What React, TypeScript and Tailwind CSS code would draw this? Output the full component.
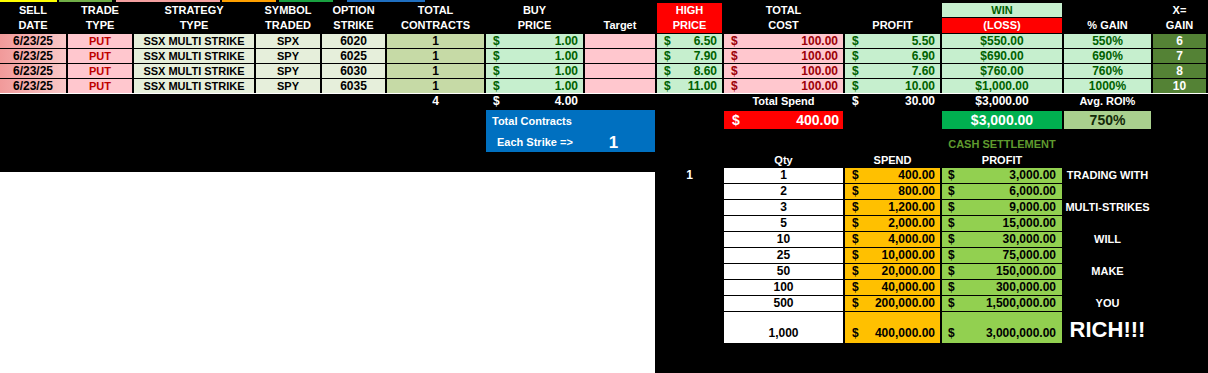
import React from 'react';

const trades = [
  { sym: 'SPX', strike: '6020', high: '6.50', profit: '5.50', win: '$550.00', gain: '550%', x: '6' },
  { sym: 'SPY', strike: '6025', high: '7.90', profit: '6.90', win: '$690.00', gain: '690%', x: '7' },
  { sym: 'SPY', strike: '6030', high: '8.60', profit: '7.60', win: '$760.00', gain: '760%', x: '8' },
  { sym: 'SPY', strike: '6035', high: '11.00', profit: '10.00', win: '$1,000.00', gain: '1000%', x: '10' },
];

const cash = [
  { qty: '1', spend: '400.00', profit: '3,000.00', side: 'TRADING WITH' },
  { qty: '2', spend: '800.00', profit: '6,000.00', side: '' },
  { qty: '3', spend: '1,200.00', profit: '9,000.00', side: 'MULTI-STRIKES' },
  { qty: '5', spend: '2,000.00', profit: '15,000.00', side: '' },
  { qty: '10', spend: '4,000.00', profit: '30,000.00', side: 'WILL' },
  { qty: '25', spend: '10,000.00', profit: '75,000.00', side: '' },
  { qty: '50', spend: '20,000.00', profit: '150,000.00', side: 'MAKE' },
  { qty: '100', spend: '40,000.00', profit: '300,000.00', side: '' },
  { qty: '500', spend: '200,000.00', profit: '1,500,000.00', side: 'YOU' },
];

const Money: React.FC<{ value: string; className?: string }> = ({ value, className = '' }) => (
  <div className={`flex justify-between pl-[7px] pr-[5px] text-[12px] ${className}`}>
    <span>$</span>
    <span>{value}</span>
  </div>
);

const App: React.FC = () => {
  return (
    <div className="w-[1208px] h-[373px] bg-white font-['Liberation_Sans',Arial,sans-serif] text-[11px] font-bold overflow-hidden">
      {/* Top table */}
      <div className="bg-black">
        {/* sheet colour strip */}
        <div className="h-[3px] flex">
          <div className="h-[2px] w-[57px] bg-[#ffff00]" />
          <div className="h-[2px] w-[53px] ml-[2px] bg-[#70ad47]" />
          <div className="h-[2px] w-[104px] ml-[4px] bg-[#f4a0a0]" />
          <div className="h-[2px] w-[54px] ml-[2px] bg-[#ffa000]" />
          <div className="h-[2px] w-[54px] ml-[3px] bg-[#19a040]" />
          <div className="h-[2px] w-[78px] ml-[14px] bg-[#1f6fc0]" />
        </div>

        <div className="grid grid-cols-[66px_64px_120px_64px_63px_97px_97px_70px_65px_119px_95px_120px_87px_53px] grid-rows-[14px_15px] auto-rows-[14px] gap-x-[2px] gap-y-px text-center leading-[14px] text-white">
          {/* header line 1 */}
          <div>SELL</div>
          <div>TRADE</div>
          <div>STRATEGY</div>
          <div>SYMBOL</div>
          <div>OPTION</div>
          <div>TOTAL</div>
          <div>BUY</div>
          <div />
          <div className="row-span-2 bg-[#ff0000] flex flex-col justify-center leading-[15px]">
            <span>HIGH</span>
            <span>PRICE</span>
          </div>
          <div>TOTAL</div>
          <div />
          <div className="bg-[#c6efce] text-[#006100]">WIN</div>
          <div />
          <div>X=</div>

          {/* header line 2 */}
          <div className="leading-[15px]">DATE</div>
          <div className="leading-[15px]">TYPE</div>
          <div className="leading-[15px]">TYPE</div>
          <div className="leading-[15px]">TRADED</div>
          <div className="leading-[15px]">STRIKE</div>
          <div className="leading-[15px]">CONTRACTS</div>
          <div className="leading-[15px]">PRICE</div>
          <div className="leading-[15px]">Target</div>
          <div className="leading-[15px]">COST</div>
          <div className="leading-[15px]">PROFIT</div>
          <div className="leading-[15px] bg-[#ff0000]">(LOSS)</div>
          <div className="leading-[15px]">% GAIN</div>
          <div className="leading-[15px]">GAIN</div>

          {trades.map((t) => (
            <React.Fragment key={t.strike}>
              <div className="bg-gradient-to-r from-[#f19a9a] to-[#f9c8c8] text-black text-[12px]">6/23/25</div>
              <div className="bg-[#ffc7ce] text-[#c00000]">PUT</div>
              <div className="bg-[#e6efdb] text-black">SSX MULTI STRIKE</div>
              <div className="bg-[#e6efdb] text-black">{t.sym}</div>
              <div className="bg-[#e6efdb] text-black text-[12px]">{t.strike}</div>
              <div className="bg-[#c6daa6] text-black text-[12px]">1</div>
              <Money value="1.00" className="bg-[#c6efce] text-[#006100]" />
              <div className="bg-[#ffc7ce]" />
              <Money value={t.high} className="bg-[#c6efce] text-[#006100]" />
              <Money value="100.00" className="bg-[#ffc7ce] text-[#9c0006]" />
              <Money value={t.profit} className="bg-[#c6efce] text-[#006100]" />
              <div className="bg-[#c6efce] text-[#006100] text-[12px]">{t.win}</div>
              <div className="bg-[#c6efce] text-[#006100] text-[12px]">{t.gain}</div>
              <div className="bg-[#548235] text-white text-[12px]">{t.x}</div>
            </React.Fragment>
          ))}
        </div>
      </div>

      {/* Lower area */}
      <div className="mt-px flex h-[279px] text-white">
        {/* left */}
        <div className="w-[655px] flex flex-col">
          <div className="h-[78px] bg-black">
            <div className="grid grid-cols-[66px_64px_120px_64px_63px_97px_97px_70px] gap-x-[2px] leading-[15px] text-center">
              <div className="col-start-6 h-[15px] text-[12px]">4</div>
              <Money value="4.00" />
              <div />
              <div className="col-start-7 col-span-2 mt-px h-[42px] bg-[#0070c0] text-left">
                <div className="h-[22px] leading-[22px] pl-[6px]">Total Contracts</div>
                <div className="h-[20px] flex items-center pl-[11px]">
                  <span>Each Strike =&gt;</span>
                  <span className="ml-[36px] text-[17px]">1</span>
                </div>
              </div>
            </div>
          </div>
          <div className="flex-1 bg-white" />
        </div>

        {/* right */}
        <div className="flex-1 bg-black pl-[2px]">
          <div className="grid grid-cols-[65px_119px_95px_120px_87px_53px] gap-x-[2px] text-center leading-[15px]">
            <div className="h-[15px]" />
            <div>Total Spend</div>
            <Money value="30.00" />
            <div className="text-[12px]">$3,000.00</div>
            <div>Avg. ROI%</div>
            <div />

            <div className="mt-[2px] h-[18px]" />
            <div className="mt-[2px] h-[18px] bg-[#ff0000] text-[14px] leading-[18px]">
              <div className="flex justify-between pl-[8px] pr-[4px]">
                <span>$</span>
                <span>400.00</span>
              </div>
            </div>
            <div className="mt-[2px]" />
            <div className="mt-[2px] bg-[#00b050] text-[14px] leading-[18px]">$3,000.00</div>
            <div className="mt-[2px] bg-[#a9d08e] text-[#142a08] text-[14px] leading-[18px]">750%</div>
            <div className="mt-[2px]" />

            <div className="col-start-4 mt-[8px] text-[#5f9a2e] whitespace-nowrap">CASH SETTLEMENT</div>
            <div className="col-start-2 h-[16px] leading-[16px]">Qty</div>
            <div className="leading-[16px]">SPEND</div>
            <div className="leading-[16px]">PROFIT</div>
          </div>

          {/* cash settlement table */}
          <div className="grid grid-cols-[65px_119px_95px_120px_87px] auto-rows-[15px] gap-x-[2px] gap-y-px leading-[15px] text-center">
            {cash.map((c, i) => (
              <React.Fragment key={c.qty}>
                <div className="text-[12px]">{i === 0 ? '1' : ''}</div>
                <div className="bg-white text-black text-[12px]">{c.qty}</div>
                <div className="bg-[#ffc000] text-black text-[12px] flex justify-between pl-[7px] pr-[5px]">
                  <span>$</span>
                  <span>{c.spend}</span>
                </div>
                <div className="bg-[#92d050] text-black text-[12px] flex justify-between pl-[6px] pr-[6px]">
                  <span>$</span>
                  <span>{c.profit}</span>
                </div>
                <div className="whitespace-nowrap">{c.side}</div>
              </React.Fragment>
            ))}
            <div className="h-[31px]" />
            <div className="h-[31px] bg-white text-black text-[12px] flex items-end justify-center pb-[2px]">1,000</div>
            <div className="h-[31px] bg-[#ffc000] text-black text-[12px] flex items-end justify-between pl-[7px] pr-[5px] pb-[2px]">
              <span>$</span>
              <span>400,000.00</span>
            </div>
            <div className="h-[31px] bg-[#92d050] text-black text-[12px] flex items-end justify-between pl-[6px] pr-[6px] pb-[2px]">
              <span>$</span>
              <span>3,000,000.00</span>
            </div>
            <div className="h-[31px] flex items-end justify-center text-[22px] leading-[26px]">RICH!!!</div>
          </div>
        </div>
      </div>
    </div>
  );
};

export default App;
